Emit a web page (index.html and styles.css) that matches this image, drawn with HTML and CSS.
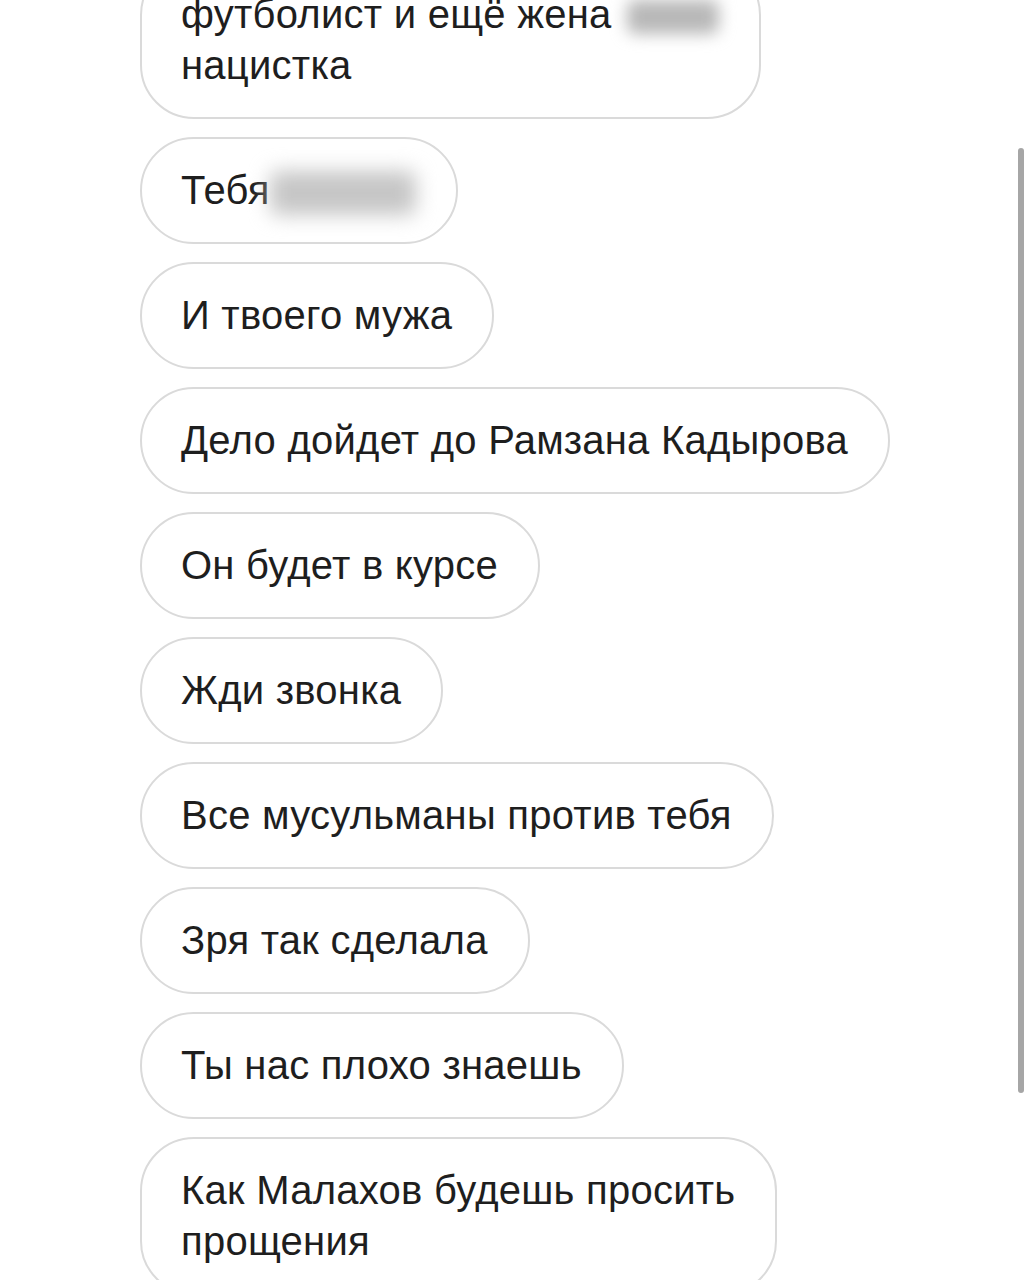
FILE: index.html
```html
<!DOCTYPE html>
<html>
  <head>
    <meta http-equiv="Content-Type" content="text/html;charset=utf-8" />
    <title>Сообщения</title>
    <link rel="stylesheet" href="styles.css">
  </head>

  <body>
    <div class="chat">
      <div class="bubble">футболист и ещё жена <span class="hidden wife"></span><br>нацистка</div>
      <div class="bubble">Тебя<span class="hidden you"></span></div>
      <div class="bubble">И твоего мужа</div>
      <div class="bubble">Дело дойдет до Рамзана Кадырова</div>
      <div class="bubble">Он будет в курсе</div>
      <div class="bubble">Жди звонка</div>
      <div class="bubble">Все мусульманы против тебя</div>
      <div class="bubble">Зря так сделала</div>
      <div class="bubble">Ты нас плохо знаешь</div>
      <div class="bubble">Как Малахов будешь просить<br>прощения</div>
    </div>

    <div class="scrollbar"></div>
  </body>
</html>
```

FILE: styles.css
```css
html,
body {
  margin: 0;
  padding: 0;
  height: 100%;
  overflow: hidden;
  background: #fff;
}

body {
  font-family: "Liberation Sans", Arial, sans-serif;
  color: #1e1e1e;
}

.chat {
  display: flex;
  flex-direction: column;
  align-items: flex-start;
  gap: 18px;
  margin-top: -39px;
  padding-left: 140px;
}

.bubble {
  border: 2px solid #dadada;
  border-radius: 54px;
  padding: 26px 40px 26px 39px;
  font-size: 40px;
  letter-spacing: 0.25px;
  line-height: 51px;
  white-space: nowrap;
}

/* blurred names */
.hidden {
  display: inline-block;
  vertical-align: middle;
  background: #b8b8b8;
  filter: blur(8px);
  border-radius: 8px;
}

.wife {
  width: 92px;
  height: 34px;
  margin-left: 4px;
}

.you {
  width: 146px;
  height: 44px;
  background: #c6c6c6;
  filter: blur(10px);
}

.scrollbar {
  position: absolute;
  top: 148px;
  left: 1018px;
  width: 6px;
  height: 945px;
  border-radius: 3px;
  background: #a6a6a6;
}
```
